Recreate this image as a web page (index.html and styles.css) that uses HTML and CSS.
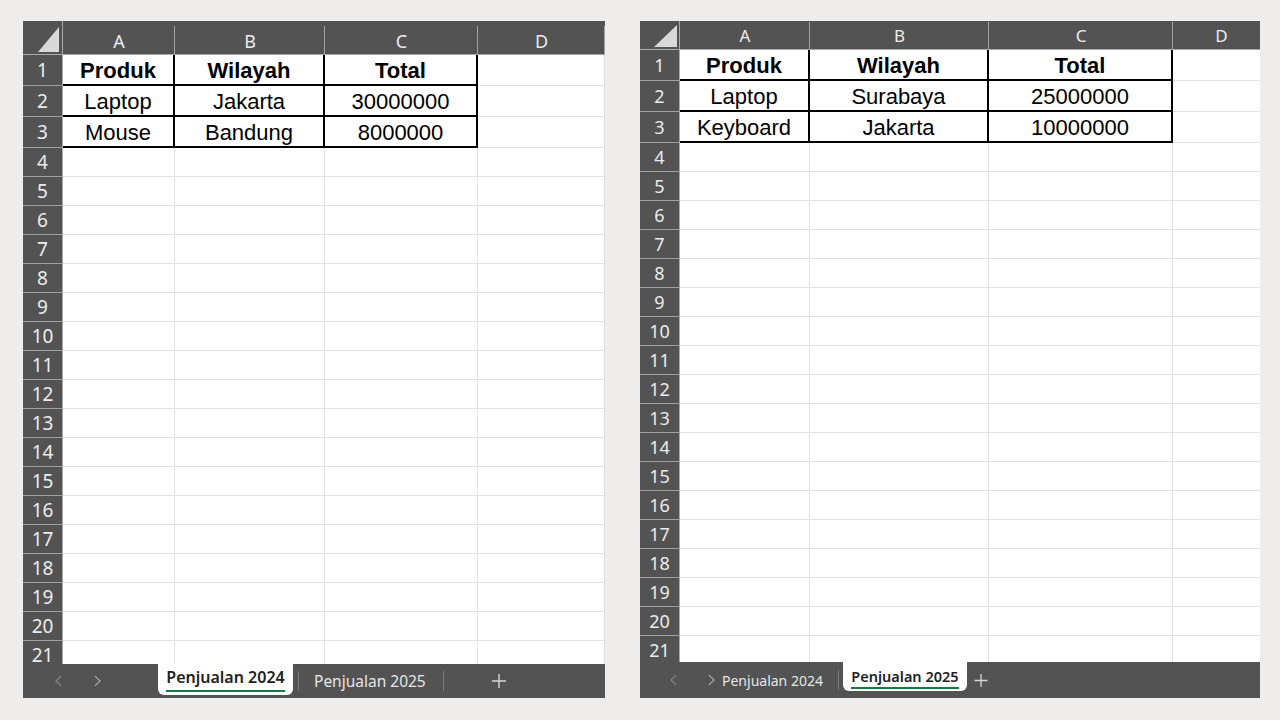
FILE: index.html
```html
<!DOCTYPE html>
<html lang="id">
<head>
<meta charset="utf-8">
<title>Penjualan</title>
<link rel="stylesheet" href="styles.css">
</head>
<body>
<div class="page">
  <section class="sheet sheet-a">
    <div class="grid">
      <div class="corner"><svg class="tri" viewBox="0 0 21 25"><polygon points="21,0 21,25 0,25" fill="#d9d9d9"/></svg></div>
      <div class="ch">A</div><div class="ch">B</div><div class="ch">C</div><div class="ch">D</div>
      <div class="rh">1</div><div class="c d b">Produk</div><div class="c d b">Wilayah</div><div class="c d b">Total</div><div class="c"></div>
      <div class="rh">2</div><div class="c d">Laptop</div><div class="c d">Jakarta</div><div class="c d">30000000</div><div class="c"></div>
      <div class="rh">3</div><div class="c d">Mouse</div><div class="c d">Bandung</div><div class="c d">8000000</div><div class="c"></div>
      <div class="rh">4</div><div class="c"></div><div class="c"></div><div class="c"></div><div class="c"></div>
      <div class="rh">5</div><div class="c"></div><div class="c"></div><div class="c"></div><div class="c"></div>
      <div class="rh">6</div><div class="c"></div><div class="c"></div><div class="c"></div><div class="c"></div>
      <div class="rh">7</div><div class="c"></div><div class="c"></div><div class="c"></div><div class="c"></div>
      <div class="rh">8</div><div class="c"></div><div class="c"></div><div class="c"></div><div class="c"></div>
      <div class="rh">9</div><div class="c"></div><div class="c"></div><div class="c"></div><div class="c"></div>
      <div class="rh">10</div><div class="c"></div><div class="c"></div><div class="c"></div><div class="c"></div>
      <div class="rh">11</div><div class="c"></div><div class="c"></div><div class="c"></div><div class="c"></div>
      <div class="rh">12</div><div class="c"></div><div class="c"></div><div class="c"></div><div class="c"></div>
      <div class="rh">13</div><div class="c"></div><div class="c"></div><div class="c"></div><div class="c"></div>
      <div class="rh">14</div><div class="c"></div><div class="c"></div><div class="c"></div><div class="c"></div>
      <div class="rh">15</div><div class="c"></div><div class="c"></div><div class="c"></div><div class="c"></div>
      <div class="rh">16</div><div class="c"></div><div class="c"></div><div class="c"></div><div class="c"></div>
      <div class="rh">17</div><div class="c"></div><div class="c"></div><div class="c"></div><div class="c"></div>
      <div class="rh">18</div><div class="c"></div><div class="c"></div><div class="c"></div><div class="c"></div>
      <div class="rh">19</div><div class="c"></div><div class="c"></div><div class="c"></div><div class="c"></div>
      <div class="rh">20</div><div class="c"></div><div class="c"></div><div class="c"></div><div class="c"></div>
      <div class="rh">21</div><div class="c"></div><div class="c"></div><div class="c"></div><div class="c"></div>
    </div>
    <div class="tabs">
      <div class="nav">
        <span class="arrow dim"><svg viewBox="0 0 8 12" class="chev"><polyline points="7,0.5 1,6 7,11.5"/></svg></span>
        <span class="arrow"><svg viewBox="0 0 8 12" class="chev"><polyline points="1,0.5 7,6 1,11.5"/></svg></span>
      </div>
      <div class="active"><span>Penjualan 2024</span></div>
      <div class="sep first"></div>
      <div class="tab">Penjualan 2025</div>
      <div class="sep second"></div>
      <div class="plus"><svg viewBox="0 0 14 14"><path d="M7 0V14M0 7H14"/></svg></div>
    </div>
  </section>

  <section class="sheet sheet-b">
    <div class="grid">
      <div class="corner"><svg class="tri" viewBox="0 0 23 22"><polygon points="23,0 23,22 0,22" fill="#d9d9d9"/></svg></div>
      <div class="ch">A</div><div class="ch">B</div><div class="ch">C</div><div class="ch">D</div>
      <div class="rh">1</div><div class="c d b">Produk</div><div class="c d b">Wilayah</div><div class="c d b">Total</div><div class="c"></div>
      <div class="rh">2</div><div class="c d">Laptop</div><div class="c d">Surabaya</div><div class="c d">25000000</div><div class="c"></div>
      <div class="rh">3</div><div class="c d">Keyboard</div><div class="c d">Jakarta</div><div class="c d">10000000</div><div class="c"></div>
      <div class="rh">4</div><div class="c"></div><div class="c"></div><div class="c"></div><div class="c"></div>
      <div class="rh">5</div><div class="c"></div><div class="c"></div><div class="c"></div><div class="c"></div>
      <div class="rh">6</div><div class="c"></div><div class="c"></div><div class="c"></div><div class="c"></div>
      <div class="rh">7</div><div class="c"></div><div class="c"></div><div class="c"></div><div class="c"></div>
      <div class="rh">8</div><div class="c"></div><div class="c"></div><div class="c"></div><div class="c"></div>
      <div class="rh">9</div><div class="c"></div><div class="c"></div><div class="c"></div><div class="c"></div>
      <div class="rh">10</div><div class="c"></div><div class="c"></div><div class="c"></div><div class="c"></div>
      <div class="rh">11</div><div class="c"></div><div class="c"></div><div class="c"></div><div class="c"></div>
      <div class="rh">12</div><div class="c"></div><div class="c"></div><div class="c"></div><div class="c"></div>
      <div class="rh">13</div><div class="c"></div><div class="c"></div><div class="c"></div><div class="c"></div>
      <div class="rh">14</div><div class="c"></div><div class="c"></div><div class="c"></div><div class="c"></div>
      <div class="rh">15</div><div class="c"></div><div class="c"></div><div class="c"></div><div class="c"></div>
      <div class="rh">16</div><div class="c"></div><div class="c"></div><div class="c"></div><div class="c"></div>
      <div class="rh">17</div><div class="c"></div><div class="c"></div><div class="c"></div><div class="c"></div>
      <div class="rh">18</div><div class="c"></div><div class="c"></div><div class="c"></div><div class="c"></div>
      <div class="rh">19</div><div class="c"></div><div class="c"></div><div class="c"></div><div class="c"></div>
      <div class="rh">20</div><div class="c"></div><div class="c"></div><div class="c"></div><div class="c"></div>
      <div class="rh">21</div><div class="c"></div><div class="c"></div><div class="c"></div><div class="c"></div>
    </div>
    <div class="tabs">
      <div class="nav">
        <span class="arrow dim"><svg viewBox="0 0 8 12" class="chev"><polyline points="7,0.5 1,6 7,11.5"/></svg></span>
        <span class="arrow"><svg viewBox="0 0 8 12" class="chev"><polyline points="1,0.5 7,6 1,11.5"/></svg></span>
      </div>
      <div class="tab">Penjualan 2024</div>
      <div class="sep first"></div>
      <div class="active"><span>Penjualan 2025</span></div>
      <div class="plus"><svg viewBox="0 0 14 14"><path d="M7 0V14M0 7H14"/></svg></div>
    </div>
  </section>
</div>
</body>
</html>
```

FILE: styles.css
```css
html, body {
  margin: 0;
  background: #eeedeb;
}

.page {
  display: flex;
  gap: 35px;
  padding: 21px 0 0 23px;
}

.sheet {
  display: flex;
  flex-direction: column;
  height: 677px;
  background: #fff;
  overflow: hidden;
}

.sheet-a { width: 582px; }
.sheet-b { width: 620px; }

.grid {
  flex: 1;
  min-height: 0;
  overflow: hidden;
  display: grid;
}

.sheet-a .grid {
  grid-template-columns: 40px 112px 150px 153px 127px;
  grid-template-rows: 34px 31px 31px 31px;
  grid-auto-rows: 29px;
}

.sheet-b .grid {
  grid-template-columns: 40px 130px 179px 184px 97px;
  grid-template-rows: 29px 31px 31px 31px;
  grid-auto-rows: 29px;
}

.corner {
  box-sizing: border-box;
  background: #535353;
  border-bottom: 1px solid #a9a9a9;
  border-right: 1px solid #a9a9a9;
  display: flex;
  justify-content: flex-end;
  align-items: flex-end;
  padding: 0 3px 2px 0;
}

.sheet-a .tri { width: 21px; height: 25px; display: block; }
.sheet-b .tri { width: 23px; height: 22px; display: block; }
.sheet-b .corner { padding: 0 2px 2px 0; }

.ch {
  box-sizing: border-box;
  background: linear-gradient(#a3a3a3, #a3a3a3) right bottom / 1px calc(100% - 5px) no-repeat, #535353;
  border-bottom: 1px solid #a9a9a9;
  color: #ececec;
  font-family: "Noto Sans", "Open Sans", sans-serif;
  font-size: 18px;
  display: flex;
  align-items: center;
  justify-content: center;
}

.sheet-a .ch { padding-top: 6px; }
.sheet-b .ch {
  font-size: 17px;
  background: linear-gradient(#a3a3a3, #a3a3a3) right bottom / 1px calc(100% - 1px) no-repeat, #535353;
}

.rh {
  box-sizing: border-box;
  background: #535353;
  border-bottom: 1px solid #a0a0a0;
  border-right: 1px solid #a9a9a9;
  color: #ececec;
  font-family: "Noto Sans", "Open Sans", sans-serif;
  font-size: 19px;
  display: flex;
  align-items: center;
  justify-content: center;
}

.sheet-b .rh { font-size: 18px; }

.c {
  box-sizing: border-box;
  border-right: 1px solid #e1e1e1;
  border-bottom: 1px solid #e1e1e1;
  font-family: "Liberation Sans", Arial, sans-serif;
  font-size: 22px;
  color: #000;
  display: flex;
  align-items: center;
  justify-content: center;
  white-space: nowrap;
}

.c.d {
  border-right: 2px solid #000;
  border-bottom: 2px solid #000;
  padding-top: 2px;
}

.c.b { font-weight: 700; }

/* Tab bar */
.tabs {
  flex: none;
  display: flex;
  align-items: flex-start;
  background: #535353;
  color: #e6e6e6;
  font-family: "Noto Sans", "Open Sans", sans-serif;
  white-space: nowrap;
}

.sheet-a .tabs { height: 34px; font-size: 15.5px; }
.sheet-b .tabs { height: 36px; font-size: 14px; }

.nav {
  align-self: stretch;
  display: flex;
  align-items: center;
  box-sizing: border-box;
}

.sheet-a .nav { width: 135px; padding-left: 25px; gap: 19px; }
.sheet-b .nav { padding-left: 23px; gap: 18px; }

.arrow {
  width: 20px;
  display: flex;
  justify-content: center;
}

.chev {
  width: 7px;
  height: 12px;
  fill: none;
  stroke: #b0b0b0;
  stroke-width: 1.2;
}

.arrow.dim .chev { stroke: #8c8c8c; }

.tab {
  align-self: stretch;
  display: flex;
  align-items: center;
}

.sheet-a .tab { margin-left: 15px; }
.sheet-b .tab { margin-left: 1px; }

.sep {
  align-self: center;
  width: 1px;
  height: 20px;
  background: #7c7c7c;
}

.sheet-a .sep.first { margin-left: 5px; }
.sheet-a .sep.second { margin-left: 17px; }
.sheet-b .sep.first { margin-left: 15px; }

.active {
  box-sizing: border-box;
  background: #fff;
  color: #222;
  font-weight: 600;
  border-radius: 0 0 6px 6px;
  display: flex;
  justify-content: center;
  align-items: flex-start;
}

.active span {
  border-bottom: 2px solid #107c41;
}

.sheet-a .active {
  width: 135px;
  height: 31px;
  padding-top: 2px;
  font-size: 16px;
}

.sheet-a .active span {
  line-height: 22px;
  padding-bottom: 2px;
}

.sheet-b .active {
  width: 124px;
  height: 29px;
  padding-top: 4px;
  margin-left: 4px;
  font-size: 14.5px;
}

.sheet-b .active span {
  line-height: 20px;
  padding-bottom: 1px;
}

.plus {
  align-self: center;
  display: flex;
}

.plus svg {
  width: 14px;
  height: 14px;
  fill: none;
  stroke: #d6d6d6;
  stroke-width: 1.4;
}

.sheet-a .plus { margin-left: 48px; }
.sheet-b .plus { margin-left: 7px; }
.sheet-b .plus svg { width: 14px; height: 13px; }
```
